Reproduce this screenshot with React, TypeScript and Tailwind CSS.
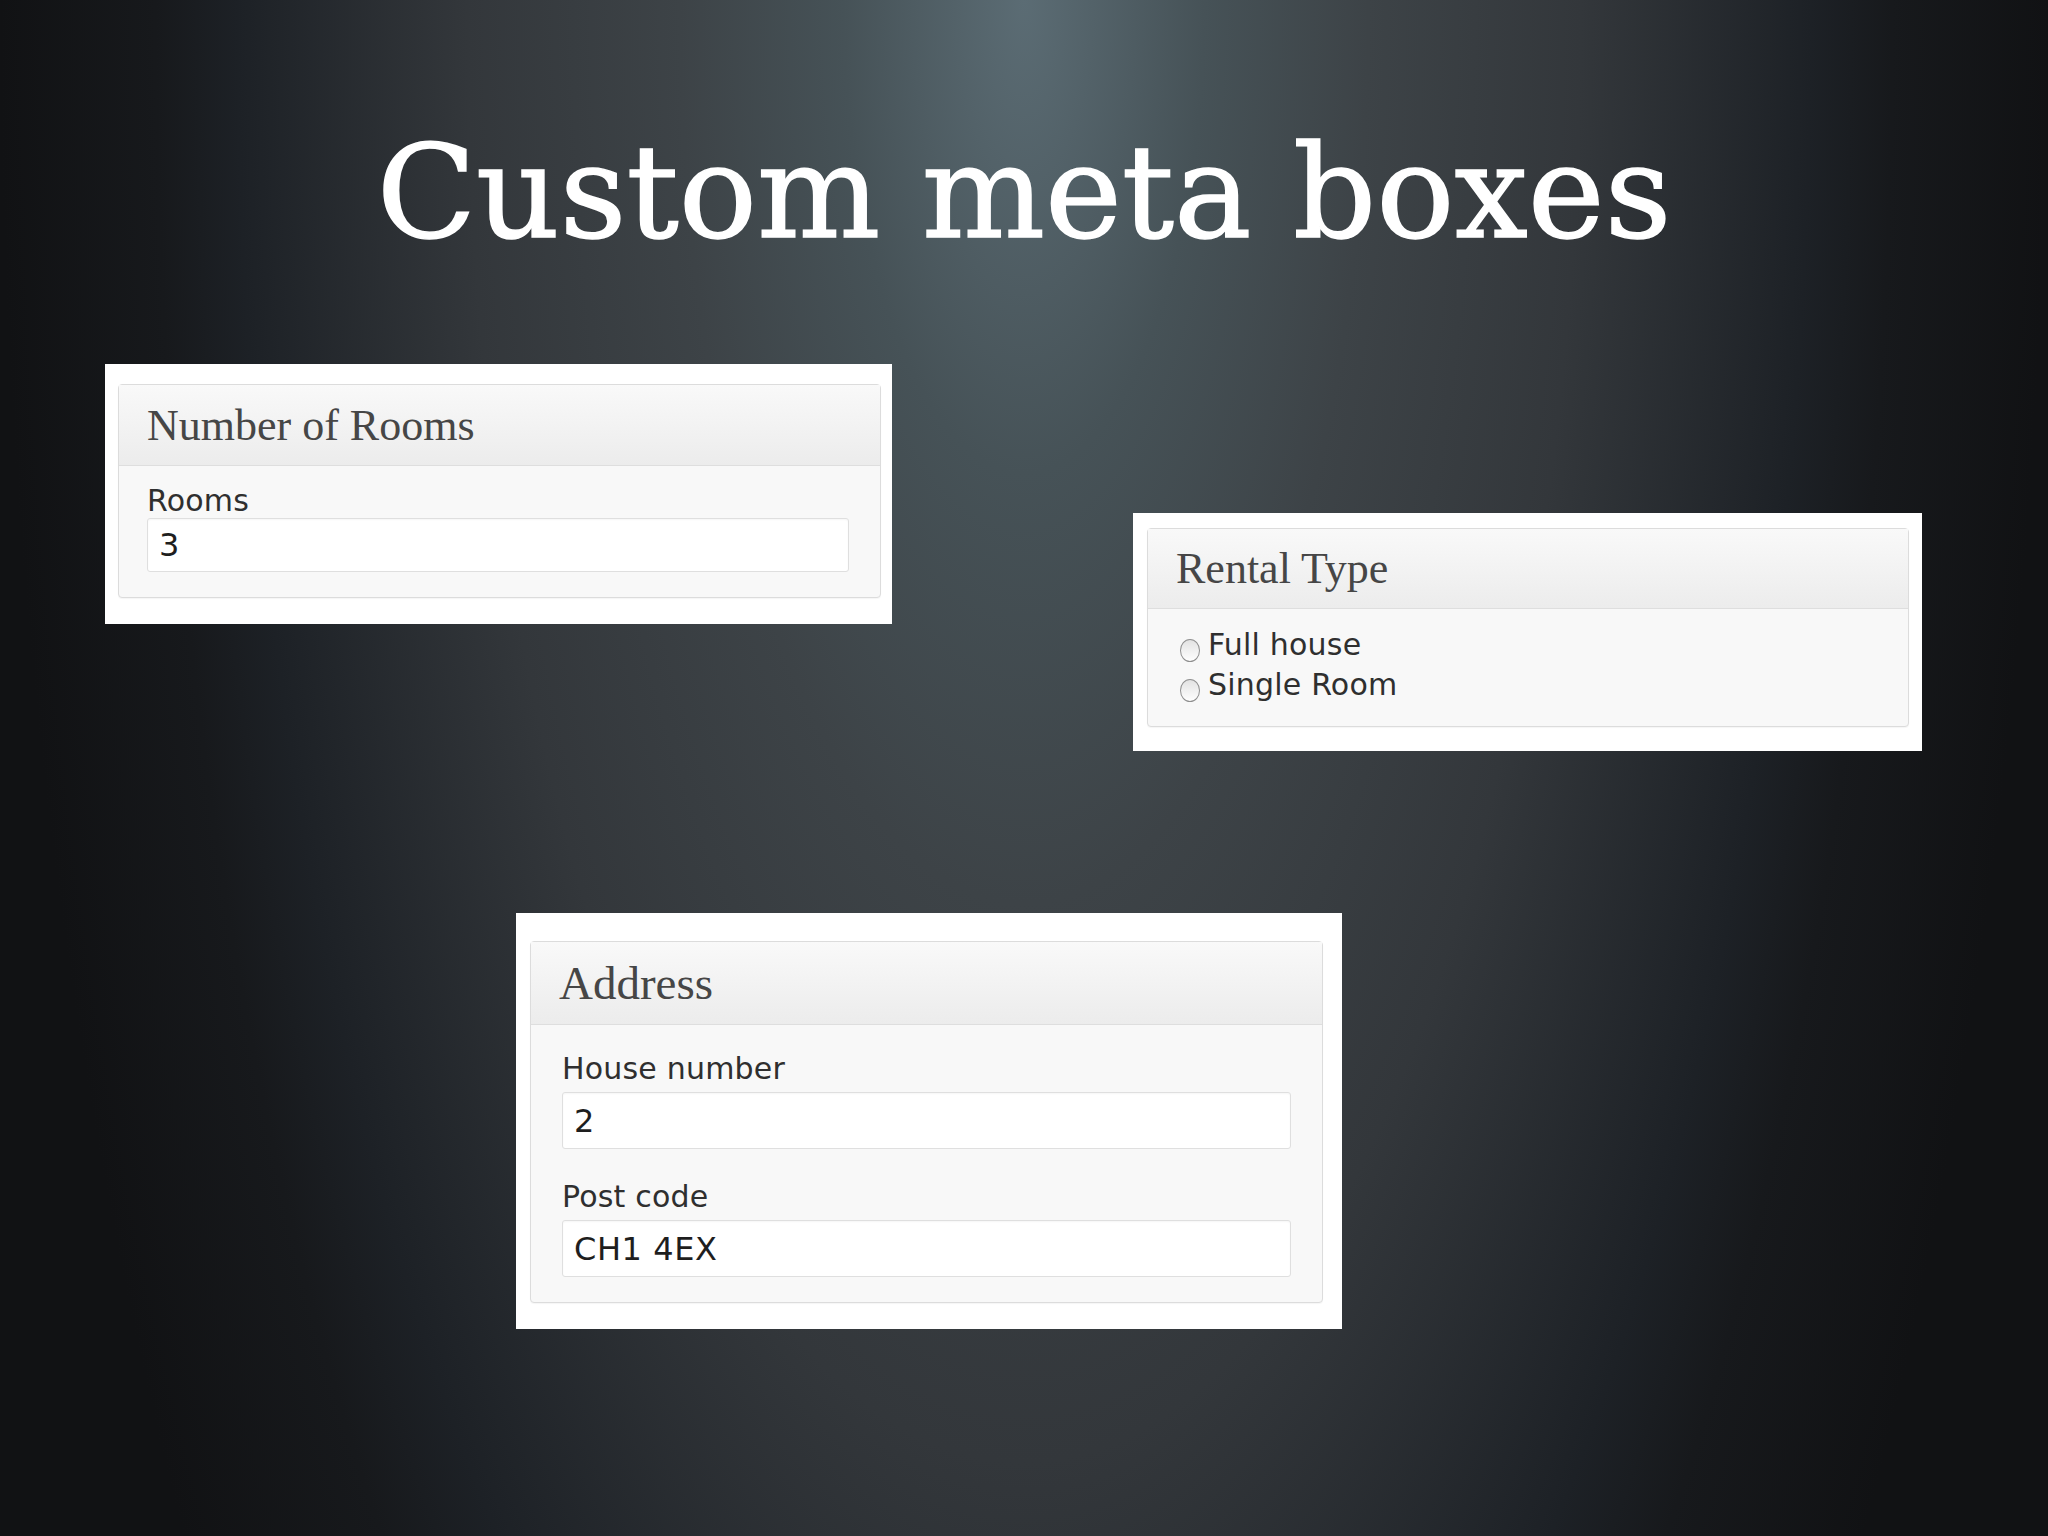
import type { ReactNode } from "react";

const serif = "font-['Liberation_Serif',Georgia,serif]";
const sans = "font-['DejaVu_Sans','Liberation_Sans',sans-serif]";

type BoxProps = {
  title: string;
  frame: string;
  head: string;
  titleSize: string;
  children: ReactNode;
};

// White frame around a WordPress-style postbox
const MetaBox = ({ title, frame, head, titleSize, children }: BoxProps) => (
  <div className={`bg-white ${frame}`}>
    <div className="rounded-[4px] border border-[#dcdcdc] bg-[#f8f8f8] shadow-[0_1px_1px_rgba(0,0,0,0.04)]">
      <div
        className={`${head} border-b border-[#dedede] bg-gradient-to-b from-[#f9f9f9] to-[#ececec] px-[28px] ${serif} ${titleSize} text-[#464646]`}
      >
        {title}
      </div>
      {children}
    </div>
  </div>
);

const Label = ({ text, className = "" }: { text: string; className?: string }) => (
  <div className={`${sans} text-[30px] leading-[34px] tracking-[0.2px] text-[#2f2f2f] ${className}`}>{text}</div>
);

const Field = ({ value, className = "" }: { value: string; className?: string }) => (
  <div
    className={`flex items-center rounded-[3px] border border-[#dfdfdf] bg-white pl-[11px] shadow-[inset_0_1px_2px_rgba(0,0,0,0.04)] ${sans} text-[32px] tracking-[0.6px] text-[#1e1e1e] ${className}`}
  >
    {value}
  </div>
);

const Radio = ({ text }: { text: string }) => (
  <div className="flex items-center gap-[8px]">
    <span className="mt-[10px] h-[23px] w-[20px] shrink-0 rounded-[50%] border-[1.5px] border-[#8f8f8f] bg-gradient-to-b from-[#e2e2e2] to-white" />
    <span className={`${sans} text-[30px] leading-[40px] tracking-[0.2px] text-[#2f2f2f]`}>{text}</span>
  </div>
);

export default function App() {
  return (
    <div className="relative h-[1536px] w-[2048px] overflow-hidden bg-[radial-gradient(ellipse_40%_140%_at_50%_0%,#5b6c74_0%,#465257_22%,#3d4347_42%,#33373b_68%,#1d2126_96%,#17191c_106%,#111214_125%)]">
      <h1 className="pt-[127px] text-center font-['DejaVu_Serif',serif] text-[130px] leading-none text-white [-webkit-text-stroke:1.5px_white]">
        Custom meta boxes
      </h1>

      <div className="mt-[107px] flex items-start">
        <MetaBox
          title="Number of Rooms"
          frame="ml-[105px] w-[787px] pl-[13px] pr-[11px] pt-[20px] pb-[26px]"
          head="h-[81px] leading-[81px]"
          titleSize="text-[44px]"
        >
          <div className="pb-[25px] pl-[28px] pr-[31px] pt-[18px]">
            <Label text="Rooms" />
            <Field value="3" className="h-[54px]" />
          </div>
        </MetaBox>

        <MetaBox
          title="Rental Type"
          frame="ml-[241px] mt-[149px] w-[789px] pl-[14px] pr-[13px] pt-[15px] pb-[24px]"
          head="h-[80px] leading-[80px]"
          titleSize="text-[44px]"
        >
          <div className="pb-[21px] pl-[32px] pt-[16px]">
            <Radio text="Full house" />
            <Radio text="Single Room" />
          </div>
        </MetaBox>
      </div>

      <MetaBox
        title="Address"
        frame="ml-[516px] mt-[162px] w-[826px] pl-[14px] pr-[19px] pt-[28px] pb-[26px]"
        head="h-[83px] leading-[83px]"
        titleSize="text-[47px]"
      >
        <div className="pb-[25px] pl-[31px] pr-[31px] pt-[27px]">
          <Label text="House number" />
          <Field value="2" className="mt-[6px] h-[57px]" />
          <Label text="Post code" className="mt-[31px]" />
          <Field value="CH1 4EX" className="mt-[6px] h-[57px]" />
        </div>
      </MetaBox>
    </div>
  );
}
